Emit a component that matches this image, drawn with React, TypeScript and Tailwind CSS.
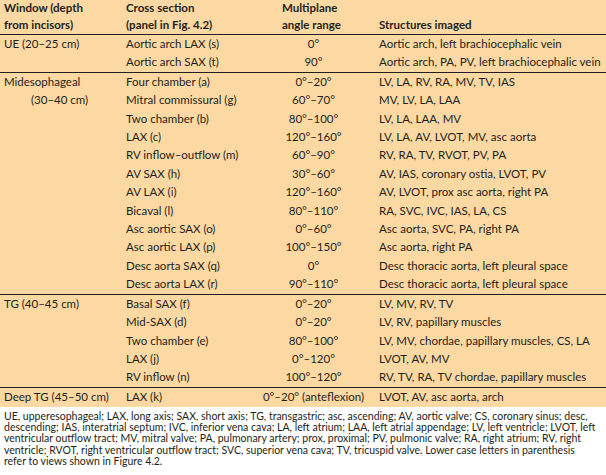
type Row = { view: string; angle: string; structures: string };
type Section = { window: string[]; rows: Row[] };

const sections: Section[] = [
  {
    window: ["UE (20–25 cm)"],
    rows: [
      { view: "Aortic arch LAX (s)", angle: "0°", structures: "Aortic arch, left brachiocephalic vein" },
      { view: "Aortic arch SAX (t)", angle: "90°", structures: "Aortic arch, PA, PV, left brachiocephalic vein" },
    ],
  },
  {
    window: ["Midesophageal", "(30–40 cm)"],
    rows: [
      { view: "Four chamber (a)", angle: "0°–20°", structures: "LV, LA, RV, RA, MV, TV, IAS" },
      { view: "Mitral commissural (g)", angle: "60°–70°", structures: "MV, LV, LA, LAA" },
      { view: "Two chamber (b)", angle: "80°–100°", structures: "LV, LA, LAA, MV" },
      { view: "LAX (c)", angle: "120°–160°", structures: "LV, LA,  AV, LVOT, MV, asc aorta" },
      { view: "RV inflow–outflow (m)", angle: "60°–90°", structures: "RV, RA, TV, RVOT, PV, PA" },
      { view: "AV SAX (h)", angle: "30°–60°", structures: "AV, IAS, coronary ostia, LVOT, PV" },
      { view: "AV LAX (i)", angle: "120°–160°", structures: "AV, LVOT, prox asc aorta, right PA" },
      { view: "Bicaval (l)", angle: "80°–110°", structures: "RA, SVC, IVC, IAS, LA, CS" },
      { view: "Asc aortic SAX (o)", angle: "0°–60°", structures: "Asc aorta, SVC, PA, right PA" },
      { view: "Asc aortic LAX (p)", angle: "100°–150°", structures: "Asc aorta, right PA" },
      { view: "Desc aorta SAX (q)", angle: "0°", structures: "Desc thoracic aorta, left pleural space" },
      { view: "Desc aorta LAX (r)", angle: "90°–110°", structures: "Desc thoracic aorta, left pleural space" },
    ],
  },
  {
    window: ["TG (40–45 cm)"],
    rows: [
      { view: "Basal SAX (f)", angle: "0°–20°", structures: "LV, MV, RV, TV" },
      { view: "Mid-SAX (d)", angle: "0°–20°", structures: "LV, RV, papillary muscles" },
      { view: "Two chamber (e)", angle: "80°–100°", structures: "LV, MV, chordae, papillary muscles, CS, LA" },
      { view: "LAX (j)", angle: "0°–120°", structures: "LVOT, AV, MV" },
      { view: "RV inflow (n)", angle: "100°–120°", structures: "RV, TV, RA, TV chordae, papillary muscles" },
    ],
  },
  {
    window: ["Deep TG (45–50 cm)"],
    rows: [{ view: "LAX (k)", angle: "0°–20° (anteflexion)", structures: "LVOT, AV, asc aorta, arch" }],
  },
];

const footnote = [
  "UE, upperesophageal; LAX, long axis; SAX, short axis; TG, transgastric; asc, ascending; AV, aortic valve; CS, coronary sinus; desc,",
  "descending; IAS, interatrial septum; IVC, inferior vena cava; LA, left atrium; LAA, left atrial appendage; LV, left ventricle; LVOT, left",
  "ventricular outflow tract; MV, mitral valve; PA, pulmonary artery; prox, proximal; PV, pulmonic valve; RA, right atrium; RV, right",
  "ventricle; RVOT, right ventricular outflow tract; SVC, superior vena cava; TV, tricuspid valve. Lower case letters in parenthesis",
  "refer to views shown in Figure 4.2.",
];

export default function App() {
  return (
    <div className="w-[606px] h-[475px] bg-white text-[#231f20] font-['Lato',sans-serif] overflow-hidden">
      <table className="w-[606px] border-collapse bg-[#fcd8a3] text-[11.5px] table-fixed">
        <colgroup>
          <col className="w-[122px]" />
          <col className="w-[130px]" />
          <col className="w-[123px]" />
          <col />
        </colgroup>
        <thead>
          <tr className="h-[33px] border-b border-[#231f20] leading-[16.5px] align-bottom text-left">
            <th className="pl-[4px] pb-[1px] font-bold">Window (depth<br />from incisors)</th>
            <th className="pl-[4px] pb-[1px] font-bold">Cross section<br />(panel in Fig. 4.2)</th>
            <th className="pl-[30px] pb-[1px] font-bold whitespace-nowrap">Multiplane<br />angle range</th>
            <th className="pl-[4px] pb-[1px] font-bold">Structures imaged</th>
          </tr>
        </thead>
        {sections.map((s, si) => (
          <tbody key={si} className={si > 0 ? "border-t border-[#231f20]" : ""}>
            {s.rows.map((r, ri) => (
              <tr key={ri} className={s.rows.length === 1 ? "h-[20px]" : "h-[18.4px]"}>
                {ri === 0 && (
                  <td rowSpan={s.rows.length} className="align-top pl-[4px] leading-[18.4px] whitespace-nowrap">
                    {s.window.map((w, wi) => (
                      <div key={wi} className={wi > 0 ? "pl-[27px]" : ""}>{w}</div>
                    ))}
                  </td>
                )}
                <td className="pl-[4px] leading-[18.4px] whitespace-nowrap">{r.view}</td>
                <td className="text-center leading-[18.4px] whitespace-nowrap">{r.angle}</td>
                <td className="pl-[4px] leading-[18.4px] whitespace-nowrap">{r.structures}</td>
              </tr>
            ))}
          </tbody>
        ))}
      </table>
      <div className="px-[4px] pt-[4px] text-[10.5px] leading-[11.1px]">
        {footnote.map((line, i) => (
          <div key={i} className="whitespace-nowrap">{line}</div>
        ))}
      </div>
    </div>
  );
}
